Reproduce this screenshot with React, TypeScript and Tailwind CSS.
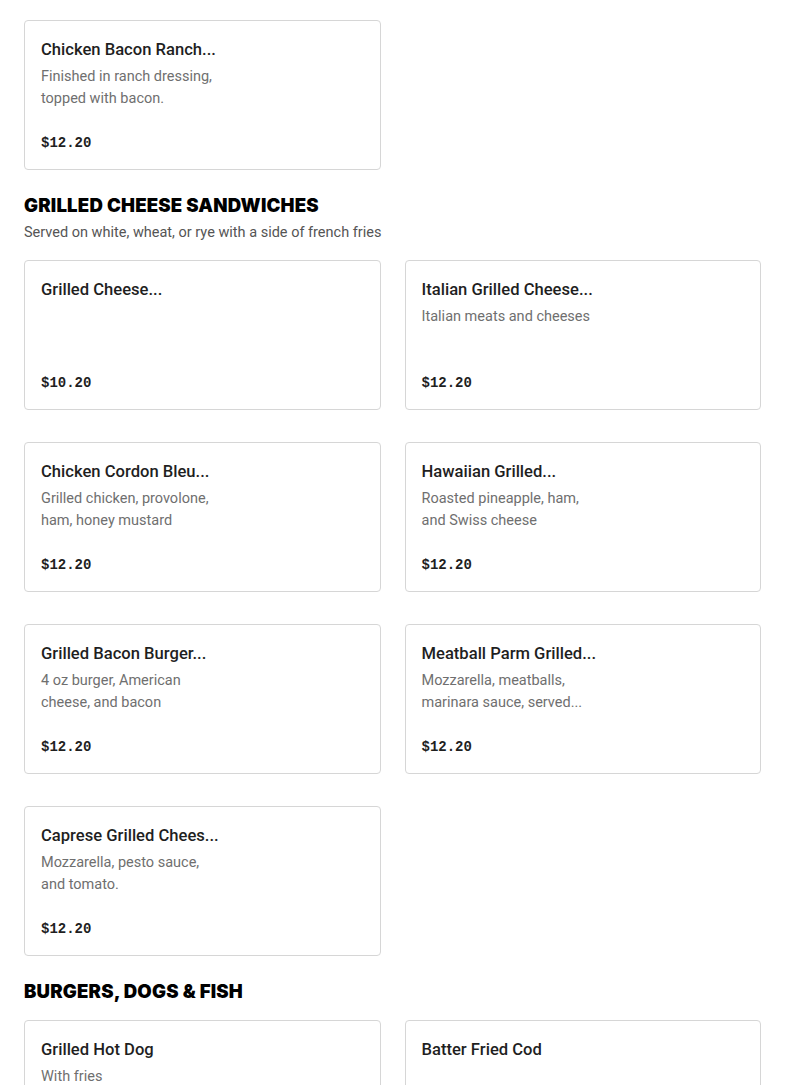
import React from "react";

type Item = { title: string; desc: string[]; price: string };

const Card = ({ item }: { item: Item }) => (
  <div className="flex h-[150px] flex-col rounded-[4px] border border-[#d6d6d6] bg-white px-4 pt-[17px] pb-4">
    <div className="text-[16.6px] font-medium leading-6 text-[#1f1f1f] [font-family:Roboto,sans-serif]">{item.title}</div>
    <div className="mt-1 text-[14.5px] leading-[22px] text-[#6f6f6f] [font-family:Roboto,sans-serif]">
      {item.desc.map((d, i) => (
        <div key={i}>{d}</div>
      ))}
    </div>
    <div className="mt-auto text-[14px] font-bold leading-5 text-[#1f1f1f] [font-family:'Liberation_Mono',monospace]">{item.price}</div>
  </div>
);

const Grid = ({ items }: { items: Item[] }) => (
  <div className="grid grid-cols-2 gap-x-6 gap-y-8">
    {items.map((it, i) => (
      <Card key={i} item={it} />
    ))}
  </div>
);

const Heading = ({ children }: { children: React.ReactNode }) => (
  <h2 className="text-[18.6px] font-black leading-7 tracking-[0.01em] text-black [font-family:Inter,sans-serif]">{children}</h2>
);

export default function App() {
  const first: Item[] = [
    { title: "Chicken Bacon Ranch...", desc: ["Finished in ranch dressing,", "topped with bacon."], price: "$12.20" },
  ];
  const grilled: Item[] = [
    { title: "Grilled Cheese...", desc: [], price: "$10.20" },
    { title: "Italian Grilled Cheese...", desc: ["Italian meats and cheeses"], price: "$12.20" },
    { title: "Chicken Cordon Bleu...", desc: ["Grilled chicken, provolone,", "ham, honey mustard"], price: "$12.20" },
    { title: "Hawaiian Grilled...", desc: ["Roasted pineapple, ham,", "and Swiss cheese"], price: "$12.20" },
    { title: "Grilled Bacon Burger...", desc: ["4 oz burger, American", "cheese, and bacon"], price: "$12.20" },
    { title: "Meatball Parm Grilled...", desc: ["Mozzarella, meatballs,", "marinara sauce, served..."], price: "$12.20" },
    { title: "Caprese Grilled Chees...", desc: ["Mozzarella, pesto sauce,", "and tomato."], price: "$12.20" },
  ];
  const burgers: Item[] = [
    { title: "Grilled Hot Dog", desc: ["With fries"], price: "$8.20" },
    { title: "Batter Fried Cod", desc: [], price: "$12.20" },
  ];
  return (
    <div className="h-[1085px] overflow-hidden bg-white px-6 pt-5">
      <Grid items={first} />
      <div className="mt-[21px]">
        <Heading>GRILLED CHEESE SANDWICHES</Heading>
        <p className="mt-[3px] text-[14.5px] leading-[22px] text-[#555] [font-family:Roboto,sans-serif]">
          Served on white, wheat, or rye with a side of french fries
        </p>
      </div>
      <div className="mt-[16px]">
        <Grid items={grilled} />
      </div>
      <div className="mt-[21px]">
        <Heading>BURGERS, DOGS &amp; FISH</Heading>
      </div>
      <div className="mt-[15px]">
        <Grid items={burgers} />
      </div>
    </div>
  );
}
